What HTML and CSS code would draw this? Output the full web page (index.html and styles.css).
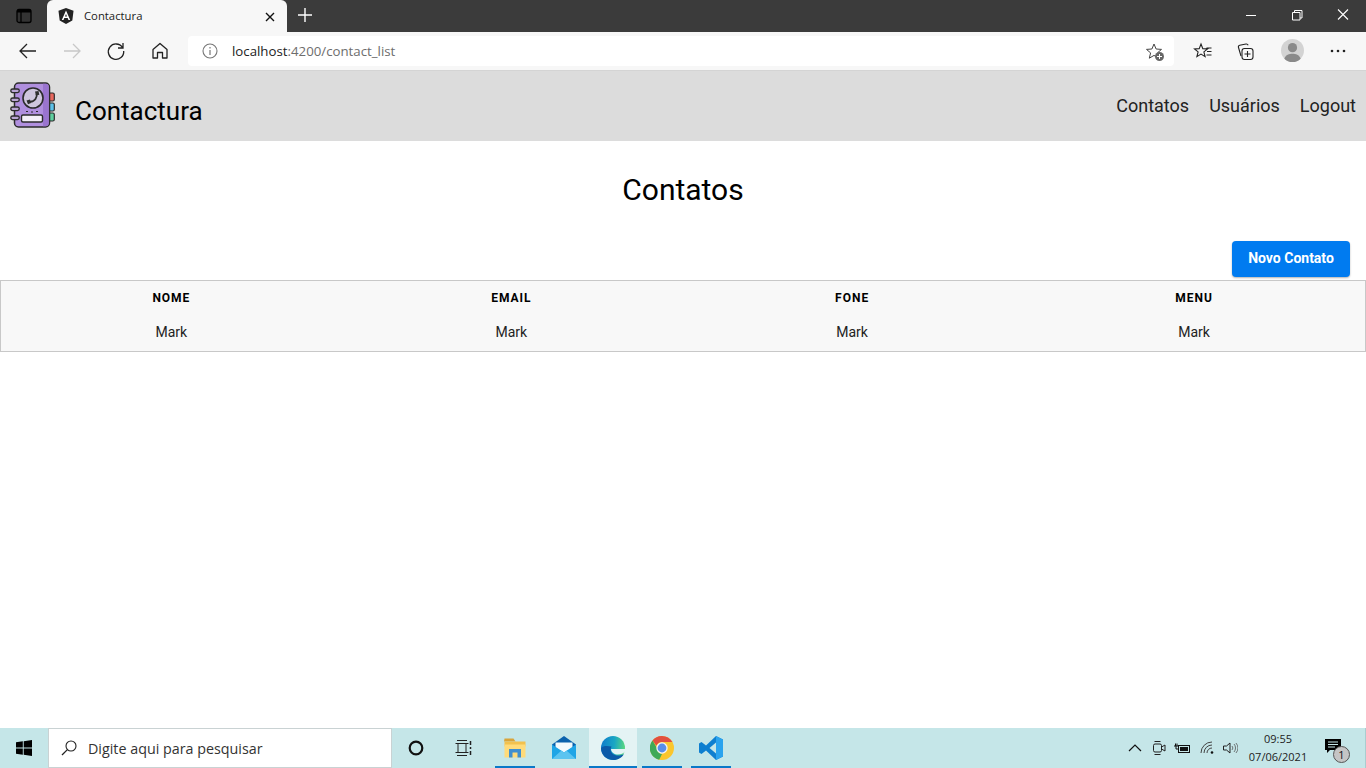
FILE: index.html
```html
<!DOCTYPE html>
<html lang="pt">
<head>
<meta charset="utf-8">
<title>Contactura</title>
<link rel="stylesheet" href="styles.css">
</head>
<body>
<div class="titlebar">
  <div class="tab-side">
    <svg class="ic16" viewBox="0 0 16 16"><rect x="1" y="1.500" width="14" height="13" rx="2" fill="#333" stroke="#000" stroke-width="1.300"/><rect x="1" y="1.500" width="14" height="3" fill="#000"/><path d="M5 2v12" stroke="#000" stroke-width="1.300"/></svg>
  </div>
  <div class="tab">
    <svg class="ic16" viewBox="0 0 16 16"><path d="M8 0 15.500 2.700 14.300 12.500 8 16 1.700 12.500.5 2.700z" fill="#222"/><path d="M8 2.500 3.800 12h1.700l.8-2.100h3.400l.8 2.100h1.700zM7 8.400 8 6l1 2.400z" fill="#fff"/></svg>
    <span class="tab-title">Contactura</span>
    <svg class="tab-close" viewBox="0 0 10 10"><path d="M1 1l8 8M9 1 1 9" stroke="#111" stroke-width="1.400"/></svg>
  </div>
  <svg class="newtab" viewBox="0 0 16 16"><path d="M8 1v14M1 8h14" stroke="#fff" stroke-width="1.400"/></svg>
  <div class="win-controls">
    <svg class="win-btn" viewBox="0 0 46 32"><path d="M18 15.500h10" stroke="#fff"/></svg>
    <svg class="win-btn" viewBox="0 0 46 32"><path d="M18.500 12.500h7.500v7.500h-7.500zM20.500 12.500v-2h7.500v7.500h-2" fill="none" stroke="#fff"/></svg>
    <svg class="win-btn" viewBox="0 0 46 32"><path d="M18 9.500l10 10M28 9.500l-10 10" stroke="#fff" stroke-width="1.100"/></svg>
  </div>
</div>
<div class="toolbar">
  <svg class="tool tool-first" viewBox="0 0 20 20"><path d="M18 10H2M9 3l-7 7 7 7" fill="none" stroke="#222" stroke-width="1.300"/></svg>
  <svg class="tool" viewBox="0 0 20 20"><path d="M2 10h16M11 3l7 7-7 7" fill="none" stroke="#c8c8c8" stroke-width="1.300"/></svg>
  <svg class="tool" viewBox="0 0 20 20"><path d="M16.500 6.500A7.700 7.700 0 1 0 17.700 10M17 2v5h-5" fill="none" stroke="#222" stroke-width="1.300"/></svg>
  <svg class="tool" viewBox="0 0 20 20"><path d="M3 8.500 10 2.500l7 6V17h-4.500v-5.500h-5V17H3z" fill="none" stroke="#222" stroke-width="1.300" stroke-linejoin="round"/></svg>
  <div class="addressbar">
    <svg class="ic16 info" viewBox="0 0 16 16"><circle cx="8" cy="8" r="7" fill="none" stroke="#777" stroke-width="1.100"/><path d="M8 7v5M8 4v1.500" stroke="#777" stroke-width="1.200"/></svg>
    <span class="url"><span class="url-host">localhost</span>:4200/contact_list</span>
    <svg class="star" viewBox="0 0 20 20"><path d="M9 2l2.100 5 5.400.4-4.100 3.500 1.300 5.300L9 13.400l-4.700 2.800 1.300-5.300L1.500 7.400 6.900 7z" fill="none" stroke="#444" stroke-width="1"/><circle cx="14.500" cy="14.500" r="4.500" fill="#666"/><path d="M14.500 12v5M12 14.500h5" stroke="#fff"/></svg>
  </div>
  <svg class="tool tool-fav" viewBox="0 0 20 20"><path d="M8 2l1.800 4.600 4.700.3-3.600 3 1.200 4.700L8 12.100l-4.100 2.500 1.200-4.700-3.600-3 4.700-.3zM13.500 6h5M14 9.500h4.500M13.500 13h5" fill="none" stroke="#222" stroke-width="1.100"/></svg>
  <svg class="tool tool-col" viewBox="0 0 20 20"><path d="M5 14 2.500 5.500c-.3-1 .2-2 1.200-2.300L10 2c1-.2 1.800.3 2.200 1.200" fill="none" stroke="#222" stroke-width="1.100"/><rect x="6" y="6.500" width="11" height="11" rx="2.500" fill="none" stroke="#222" stroke-width="1.100"/><path d="M11.500 9v6M8.500 12h6" stroke="#222" stroke-width="1.100"/></svg>
  <svg class="avatar" viewBox="0 0 24 24"><circle cx="12" cy="12" r="12" fill="#d3d3d3"/><circle cx="12" cy="9" r="4.800" fill="#8a8a8a"/><path d="M3.500 20.500c1.500-4 5-5 8.500-5s7 1 8.500 5A12 12 0 0 1 12 24a12 12 0 0 1-8.500-3.500z" fill="#8a8a8a"/></svg>
  <svg class="tool tool-more" viewBox="0 0 20 20"><circle cx="4" cy="10" r="1.300" fill="#222"/><circle cx="10" cy="10" r="1.300" fill="#222"/><circle cx="16" cy="10" r="1.300" fill="#222"/></svg>
</div>
<nav class="navbar">
  <svg class="logo" viewBox="0 0 46 46">
    <rect x="38" y="11" width="6.300" height="8" rx="1.500" fill="#e8685f" stroke="#2b2b2b" stroke-width="1.200"/>
    <rect x="38" y="21" width="6.300" height="8" rx="1.500" fill="#5cc2ea" stroke="#2b2b2b" stroke-width="1.200"/>
    <rect x="38" y="31" width="6.300" height="8" rx="1.500" fill="#5fd0a0" stroke="#2b2b2b" stroke-width="1.200"/>
    <rect x="4.500" y="1" width="35" height="44" rx="4" fill="#b08fde" stroke="#2b2b2b" stroke-width="1.500"/>
    <path d="M33 1.800h3c1.500 0 2.700 1 2.700 2.700v36.800c0 1.500-1.200 3-2.700 3h-3z" fill="#9a74cf"/>
    <circle cx="23" cy="16" r="10" fill="#cfc6de" stroke="#2b2b2b" stroke-width="1.600"/>
    <path d="M18.500 19.500q4.500 1 7-2.500 2-2.800 1-5.500" fill="none" stroke="#2f2f2f" stroke-width="1.800"/>
    <path d="M16.500 18.500l3.500-1 1 3.500-3 1.200zM25 9.500l3.500-.5.800 3.800-3.300.8z" fill="#2f2f2f"/>
    <rect x="11.500" y="33" width="21" height="7" rx="1.500" fill="#f4f0f8" stroke="#2b2b2b" stroke-width="1.400"/>
    <path d="M16 29.500h2M21 30h2M26 29.500h2" stroke="#2b2b2b" stroke-width="1.200"/>
    <g fill="#b9a6d3" stroke="#2b2b2b" stroke-width="1.300">
      <rect x="0.800" y="7" width="8.500" height="3.600" rx="1.800"/>
      <rect x="0.800" y="16" width="8.500" height="3.600" rx="1.800"/>
      <rect x="0.800" y="25" width="8.500" height="3.600" rx="1.800"/>
      <rect x="0.800" y="34" width="8.500" height="3.600" rx="1.800"/>
    </g>
  </svg>
  <a class="brand">Contactura</a>
  <ul class="nav-links">
    <li>Contatos</li>
    <li>Usuários</li>
    <li>Logout</li>
  </ul>
</nav>
<main class="content">
  <h1 class="page-title">Contatos</h1>
  <div class="actions"><button class="btn-primary">Novo Contato</button></div>
  <table class="contacts">
    <colgroup><col class="col-a"><col class="col-b"><col class="col-c"><col class="col-d"></colgroup>
    <thead>
      <tr><th>NOME</th><th>EMAIL</th><th>FONE</th><th>MENU</th></tr>
    </thead>
    <tbody>
      <tr><td>Mark</td><td>Mark</td><td>Mark</td><td>Mark</td></tr>
    </tbody>
  </table>
</main>
<footer class="taskbar">
  <svg class="start" viewBox="0 0 16 16"><path d="M0 2.300 6.800 1.300V7.500H0zM7.700 1.200 16 0V7.500H7.700zM0 8.400H6.800V14.700L0 13.700zM7.700 8.400H16V16L7.700 14.800z" fill="#000"/></svg>
  <div class="searchbox">
    <svg class="search-ic" viewBox="0 0 16 16"><circle cx="10" cy="6" r="5" fill="none" stroke="#222" stroke-width="1.100"/><path d="M6.400 9.600 1 15" stroke="#222" stroke-width="1.300"/></svg>
    <span class="search-text">Digite aqui para pesquisar</span>
  </div>
  <div class="task-slot task-plain"><svg class="ic16" viewBox="0 0 16 16"><circle cx="8" cy="8" r="6.300" fill="none" stroke="#111" stroke-width="2.200"/></svg></div>
  <div class="task-slot task-plain"><svg class="ic18" viewBox="0 0 18 18"><path d="M2 1.500h10M2 16.500h10M3 4.500h8v9H3zM0.500 4.500h13M0.500 13.500h13" fill="none" stroke="#222" stroke-width="1"/><path d="M15.500 2v4M15.500 8v2M15.500 12v4" stroke="#222" stroke-width="1.500"/></svg></div>
  <div class="task-slot running task-first">
    <svg class="ic24" viewBox="0 0 24 24"><path d="M1.500 2.500h9l2 3h-11.500z" fill="#d9a43a"/><path d="M1.500 5.500h21v5h-21z" fill="#f2c14e"/><path d="M1.500 8.500h21v13h-21z" fill="#ffdb7a"/><path d="M6 13h12v8.500h-3.500v-5h-5v5H6z" fill="#3f8fd0"/></svg>
  </div>
  <div class="task-slot">
    <svg class="ic24" viewBox="0 0 24 24"><path d="M0 8.500 12 0l12 8.500V23H0z" fill="#0b62ad"/><path d="M3.500 6.500h17v5L12 17 3.500 11.500z" fill="#f2fafd"/><path d="M0 8.500l12 8 12-8V23H0z" fill="#1fa5e6"/><path d="M0 23l9.500-8.500 2.500 2 2.500-2L24 23z" fill="#5cc4f0"/></svg>
  </div>
  <div class="task-slot running active">
    <svg class="ic24" viewBox="0 0 24 24"><defs><linearGradient id="edgeTop" x1="0" y1="0.300" x2="1" y2="0.400"><stop offset="0" stop-color="#0f7ccb"/><stop offset=".55" stop-color="#1aa6c4"/><stop offset="1" stop-color="#5ad77f"/></linearGradient></defs><circle cx="12" cy="12" r="12" fill="url(#edgeTop)"/><path d="M10 13C10 16.500 13.500 18.500 17 18.500 20 18.500 22.500 17.500 24 15.500V13z" fill="#e4f3f4"/><path d="M0 12C0 19 5.500 24 12.500 24 17 24 21 21.500 23 18 20.500 19.500 17 20 14 19 10.500 17.800 8.500 14.500 10.500 10.500 6.500 10 2 9.500 0 12z" fill="#0b5aa8"/></svg>
  </div>
  <div class="task-slot running">
    <svg class="ic24" viewBox="0 0 24 24"><circle cx="12" cy="12" r="12" fill="#fbc62d"/><path d="M12 0a12 12 0 0 1 10.400 6H12a6 6 0 0 0-5.600 3.800L2.500 4.400A12 12 0 0 1 12 0z" fill="#e2503f"/><path d="M2.500 4.400l5 8.600a5 5 0 0 0 4.500 5l-2.800 5.700A12 12 0 0 1 2.500 4.400z" fill="#3fa957"/><circle cx="12" cy="12" r="5.700" fill="#f4f4f4"/><circle cx="12" cy="12" r="4.400" fill="#5a8ee8"/></svg>
  </div>
  <div class="task-slot running">
    <svg class="ic24" viewBox="0 0 24 24"><path d="M17 0 24 3.500v17L17 24 7 14.500 2.500 18 0 16.500V7.500L2.500 6 7 9.500z" fill="#0e7fd0"/><path d="M17 0 24 3.500v17L17 24z" fill="#2aa3ee"/><path d="M17 6.500 10.500 12l6.500 5.500z" fill="#c5e6e8"/></svg>
  </div>
  <div class="tray">
    <svg class="tray-ic tray-chevron" viewBox="0 0 16 16"><path d="M2 11l6-6 6 6" fill="none" stroke="#111" stroke-width="1.200"/></svg>
    <svg class="tray-ic tray-cam" viewBox="0 0 16 16"><rect x="2.500" y="4" width="8" height="8" rx="1.500" fill="none" stroke="#222"/><path d="M10.500 7l3.500-2v6l-3.500-2M3.500 1.500h6M3.500 14.500h6" fill="none" stroke="#222"/></svg>
    <svg class="tray-ic tray-battery" viewBox="0 0 16 16"><rect x="4.500" y="5.500" width="11" height="7" fill="#c5e6e8" stroke="#111"/><rect x="6" y="7" width="8" height="4" fill="#111"/><path d="M0 6h4M1.500 3.500v2.500M3 3.500v2.500M2 6v3h3" fill="none" stroke="#111"/></svg>
    <svg class="tray-ic tray-wifi" viewBox="0 0 16 16"><path d="M1 13A11 11 0 0 1 12 2M4 13a8 8 0 0 1 8-8M7 13a5 5 0 0 1 5-5" fill="none" stroke="#444"/><circle cx="12" cy="12.500" r="1.300" fill="#111"/></svg>
    <svg class="tray-ic tray-vol" viewBox="0 0 16 16"><path d="M1.500 6v4h3l3.500 3V3L4.500 6z" fill="none" stroke="#222"/><path d="M10 6a3 3 0 0 1 0 4M12 4a6 6 0 0 1 0 8M14 3a8 8 0 0 1 0 10" fill="none" stroke="#555" stroke-width=".8"/></svg>
    <div class="clock"><span>09:55</span><span>07/06/2021</span></div>
    <div class="notify">
      <svg class="notify-ic" viewBox="0 0 16 16"><path d="M0 1h16v11H5l-3 3v-3H0z" fill="#000"/><path d="M3 4h10M3 6.500h10M3 9h7" stroke="#c5e6e8"/></svg>
      <span class="notify-badge">1</span>
    </div>
  </div>
</footer>
</body>
</html>
```

FILE: styles.css
```css
* { box-sizing: border-box; }
html, body { margin: 0; padding: 0; height: 100%; }
body {
  width: 1366px;
  height: 768px;
  overflow: hidden;
  display: flex;
  flex-direction: column;
  background: #fff;
  font-family: Roboto, "Liberation Sans", sans-serif;
  color: #000;
}
svg { display: block; flex: none; }
.ic16 { width: 16px; height: 16px; }
.ic18 { width: 18px; height: 18px; }
.ic24 { width: 24px; height: 24px; }

.titlebar {
  height: 32px;
  flex: none;
  background: #3b3b3b;
  display: flex;
  align-items: flex-end;
}
.tab-side {
  width: 47px;
  height: 32px;
  padding-left: 16px;
  display: flex;
  align-items: center;
}
.tab {
  width: 240px;
  height: 32px;
  background: #f7f7f7;
  border-radius: 6px 6px 0 0;
  display: flex;
  align-items: center;
  padding: 0 12px 1px 11px;
}
.tab-title {
  margin-left: 10px;
  font: 11.300px "Open Sans", "Liberation Sans", sans-serif;
  color: #222;
  flex: 1;
}
.tab-close { width: 10px; height: 10px; margin-top: 2px; }
.newtab { width: 16px; height: 16px; margin: 0 0 9px 10px; }
.win-controls { margin-left: auto; display: flex; }
.win-btn { width: 46px; height: 32px; }

.toolbar {
  height: 39px;
  flex: none;
  background: #f7f7f7;
  border-bottom: 1px solid #d4d4d4;
  display: flex;
  align-items: center;
  padding-bottom: 1px;
}
.tool { width: 20px; height: 20px; margin-right: 24px; }
.tool-first { margin-left: 18px; }
.addressbar {
  width: 986px;
  height: 30px;
  margin-left: -6px;
  background: #fff;
  border-radius: 4px;
  display: flex;
  align-items: center;
  padding: 0 9px 0 14px;
}
.url {
  margin-left: 14px;
  font: 13.250px "Open Sans", "Liberation Sans", sans-serif;
  color: #6d6d6d;
  flex: 1;
}
.url-host { color: #222; }
.star { width: 20px; height: 20px; margin-top: 2px; }
.tool-fav { margin-left: 19px; margin-right: 23px; margin-top: 2px; }
.tool-col { margin-right: 25px; margin-top: 2px; }
.avatar { width: 23px; height: 23px; margin-right: 24px; }
.tool-more { margin-right: 0; }

.navbar {
  height: 70px;
  flex: none;
  background: #dcdcdc;
  display: flex;
  align-items: center;
  padding: 0 10px;
}
.logo { width: 46px; height: 46px; margin-bottom: 2px; }
.brand {
  margin-left: 19px;
  font-size: 26px;
  line-height: 32px;
  padding-top: 10px;
}
.nav-links {
  margin: 0 0 0 auto;
  padding: 0 0 1px;
  list-style: none;
  display: flex;
  gap: 20px;
  font-size: 18px;
  color: #222;
}

.content { flex: 1; }
.page-title {
  margin: 0;
  padding-top: 31px;
  font-size: 30px;
  font-weight: 400;
  line-height: 36px;
  text-align: center;
}
.actions {
  display: flex;
  justify-content: flex-end;
  padding: 33px 16px 3px 0;
}
.btn-primary {
  width: 118px;
  height: 36px;
  border: 0;
  border-radius: 4px;
  padding: 0 0 2px;
  background: #007bf0;
  color: #fff;
  font: 700 14px Roboto, sans-serif;
  box-shadow: 0 1px 2px rgba(0, 0, 0, .3);
}
.contacts {
  width: 100%;
  table-layout: fixed;
  border-collapse: collapse;
  border: 1px solid #c8c8c8;
  background: #f8f8f8;
}
.col-a { width: 341px; }
.col-b { width: 339px; }
.col-c { width: 342px; }
.col-d { width: 342px; }
.contacts th {
  height: 34px;
  padding: 0;
  font-size: 12px;
  font-weight: 700;
  letter-spacing: 1px;
  text-align: center;
}
.contacts td {
  height: 37px;
  padding: 0 0 1px;
  font-size: 14px;
  color: #222;
  text-align: center;
}

.taskbar {
  height: 40px;
  flex: none;
  background: #c5e6e8;
  display: flex;
  align-items: center;
}
.start { width: 16px; height: 16px; margin: 0 16px 0 16px; }
.searchbox {
  width: 344px;
  height: 40px;
  background: #fff;
  border: 1px solid #c9d2d3;
  display: flex;
  align-items: center;
  padding-left: 12px;
}
.search-ic { width: 16px; height: 16px; }
.search-text {
  margin-left: 11px;
  font: 14.300px "Open Sans", "Liberation Sans", sans-serif;
  color: #333;
}
.task-slot {
  position: relative;
  width: 48px;
  height: 40px;
  margin-right: 1px;
  display: flex;
  align-items: center;
  justify-content: center;
}
.task-plain { margin-right: 0; }
.task-first { margin-left: 3px; }
.task-slot.running::after {
  content: "";
  position: absolute;
  left: 4px;
  right: 4px;
  bottom: 0;
  height: 2px;
  background: #0a78c8;
}
.task-slot.active { background: #e4f3f4; }
.task-slot.active::after { left: 0; right: 0; }
.tray {
  margin-left: auto;
  height: 40px;
  padding-right: 5px;
  border-right: 1px solid #a9cdd0;
  box-sizing: content-box;
  display: flex;
  align-items: center;
}
.tray-ic { width: 16px; height: 16px; }
.tray-chevron { margin-right: 8px; }
.tray-cam { margin-right: 7px; }
.tray-battery { margin-right: 10px; }
.tray-wifi { margin-right: 6px; }
.tray-vol { margin-right: 7px; }
.clock {
  width: 66px;
  margin-right: 5px;
  display: flex;
  flex-direction: column;
  align-items: center;
  gap: 4px;
  font: 11px/14px "Open Sans", "Liberation Sans", sans-serif;
  color: #222;
}
.notify {
  position: relative;
  width: 44px;
  height: 40px;
  display: flex;
  align-items: center;
  justify-content: center;
}
.notify-ic { width: 16px; height: 16px; margin-right: 10px; margin-bottom: 4px; }
.notify-badge {
  position: absolute;
  left: 17px;
  top: 18px;
  width: 17px;
  height: 17px;
  border-radius: 50%;
  background: #c5c5c5;
  border: 1px solid #555;
  font: 11px/15px "Open Sans", sans-serif;
  text-align: center;
  color: #111;
}
```
